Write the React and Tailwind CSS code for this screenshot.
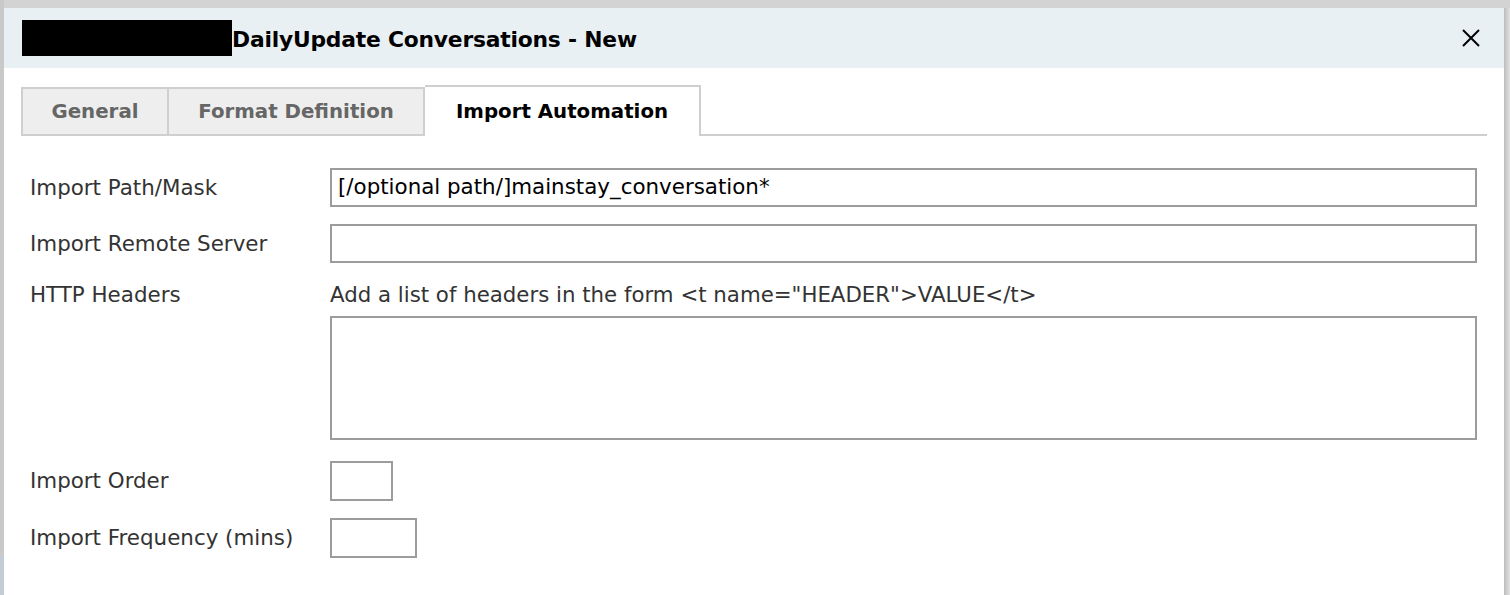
import React from "react";

const font = { fontFamily: "'DejaVu Sans', Verdana, sans-serif" };

const Field = ({ label, children, className = "" }) => (
  <div className={`flex items-center ${className}`}>
    <div className="w-[300px] shrink-0 text-[21.4px] leading-[24px] text-[#333]">
      {label}
    </div>
    {children}
  </div>
);

const App = () => {
  return (
    <div
      className="w-[1510px] h-[595px] overflow-hidden flex bg-[#d3d3d3]"
      style={font}
    >
      {/* page peeking behind the dialog */}
      <div className="w-[4px] shrink-0 flex flex-col">
        <div className="h-[556px] bg-[#c9c9c9]" />
        <div className="flex-1 bg-[#c3ccd4]" />
      </div>

      <div className="w-[1500px] shrink-0 mt-[8px] flex flex-col bg-white">
        {/* header */}
        <div className="h-[60px] shrink-0 bg-[#e8f0f4] flex items-center pl-[18px] pr-[23px]">
          <div className="w-[210px] h-[36px] bg-black shrink-0" />
          <div className="mt-[4px] text-[21.8px] leading-[26px] font-bold text-black tracking-[-0.2px]">
            DailyUpdate Conversations - New
          </div>
          <button className="ml-auto w-[20px] h-[20px] flex items-center justify-center">
            <svg width="20" height="20" viewBox="0 0 20 20">
              <path
                d="M2 2 L18 18 M18 2 L2 18"
                stroke="#000"
                strokeWidth="2"
                fill="none"
              />
            </svg>
          </button>
        </div>

        {/* tabs */}
        <div className="px-[17px] pt-[17px]">
          <div className="flex items-end border-b-2 border-[#cfcfcf]">
            <div className="w-[148px] h-[49px] -mb-[2px] flex items-center justify-center bg-[#eeeeee] border-2 border-[#cfcfcf] text-[19.8px] font-bold text-[#666]">
              General
            </div>
            <div className="w-[256px] h-[49px] -mb-[2px] flex items-center justify-center bg-[#eeeeee] border-2 border-l-0 border-[#cfcfcf] text-[19.8px] font-bold text-[#666]">
              Format Definition
            </div>
            <div className="w-[276px] h-[51px] -mb-[2px] flex items-center justify-center bg-white border-2 border-b-0 border-l-0 border-[#cfcfcf] text-[19.8px] font-bold text-black">
              Import Automation
            </div>
          </div>
        </div>

        {/* form */}
        <div className="pl-[26px] pr-[27px] pt-[32px] flex flex-col">
          <Field label="Import Path/Mask">
            <div className="flex-1 h-[39px] border-2 border-[#9c9c9c] px-[6px] flex items-center text-[21.4px] text-black">
              [/optional path/]mainstay_conversation*
            </div>
          </Field>
          <Field label="Import Remote Server" className="mt-[17px]">
            <div className="flex-1 h-[39px] border-2 border-[#9c9c9c]" />
          </Field>
          <Field label="HTTP Headers" className="mt-[20px]">
            <div className="text-[21.3px] leading-[24px] text-[#333]">
              Add a list of headers in the form &lt;t name="HEADER"&gt;VALUE&lt;/t&gt;
            </div>
          </Field>
          <div className="flex mt-[9px]">
            <div className="w-[300px] shrink-0" />
            <div className="flex-1 h-[124px] border-2 border-[#9c9c9c]" />
          </div>
          <Field label="Import Order" className="mt-[21px]">
            <div className="w-[63px] h-[40px] border-2 border-[#9c9c9c]" />
          </Field>
          <Field label="Import Frequency (mins)" className="mt-[17px]">
            <div className="w-[87px] h-[40px] border-2 border-[#9c9c9c]" />
          </Field>
        </div>
      </div>

      <div className="flex-1 mt-[8px] bg-gradient-to-r from-[#bdbdbd] to-[#e2e2e2]" />
    </div>
  );
};

export default App;
